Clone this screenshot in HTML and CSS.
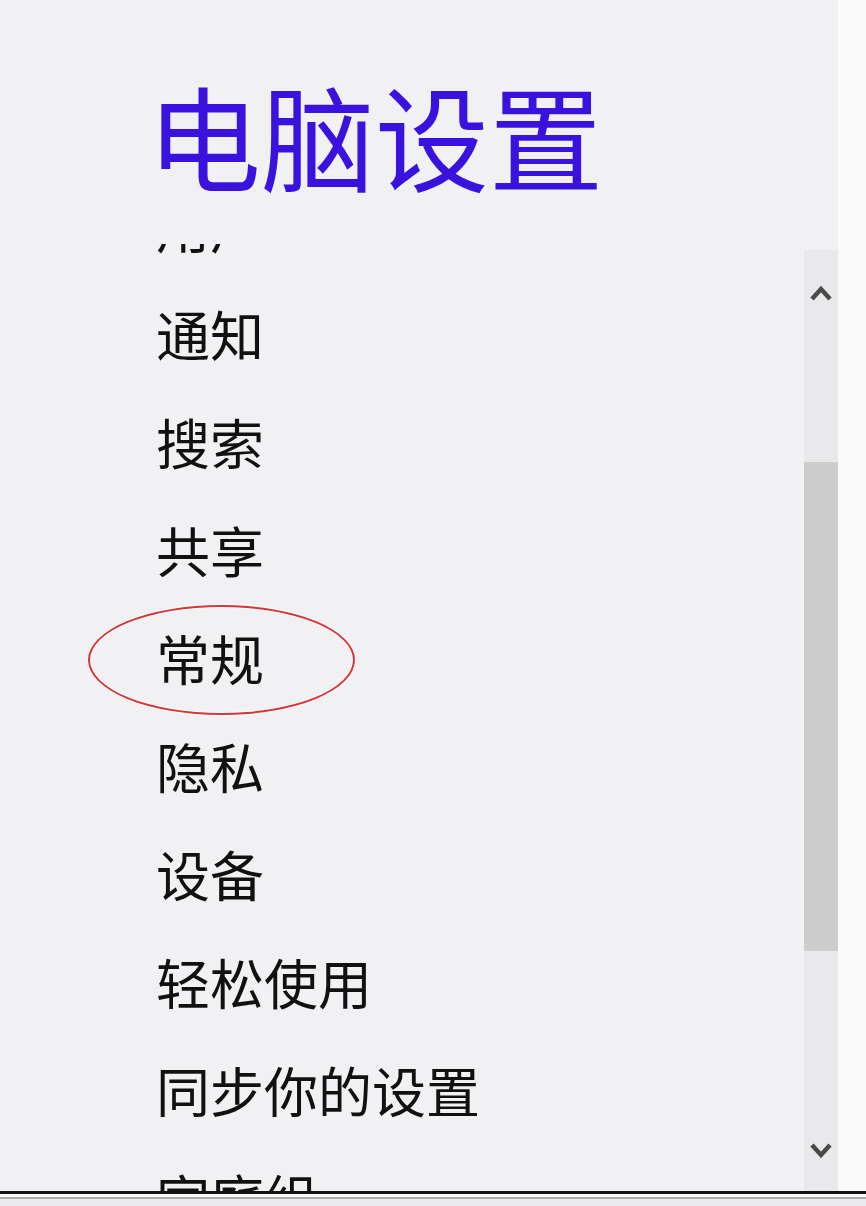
FILE: index.html
```html
<!DOCTYPE html>
<html>
<head>
    <title>电脑设置</title>
    <link rel="stylesheet" href="styles.css">
</head>
<body>
    <div class="window">
        <div class="main">
            <div class="header">
                <h1 class="title">电脑设置</h1>
            </div>
            <div class="pane">
                <div class="list-view">
                    <ul class="menu">
                        <li class="menu-item">用户</li>
                        <li class="menu-item">通知</li>
                        <li class="menu-item">搜索</li>
                        <li class="menu-item">共享</li>
                        <li class="menu-item marked">常规<span class="ring"></span></li>
                        <li class="menu-item">隐私</li>
                        <li class="menu-item">设备</li>
                        <li class="menu-item">轻松使用</li>
                        <li class="menu-item">同步你的设置</li>
                        <li class="menu-item">家庭组</li>
                    </ul>
                </div>
                <div class="scrollbar">
                    <div class="scroll-btn up">
                        <svg width="24" height="18" viewBox="0 0 24 18"><path d="M3 15 L12 5 L21 15" fill="none" stroke="#4a4a4a" stroke-width="4.5"/></svg>
                    </div>
                    <div class="scroll-track">
                        <div class="scroll-thumb"></div>
                    </div>
                    <div class="scroll-btn down">
                        <svg width="24" height="18" viewBox="0 0 24 18"><path d="M3 3 L12 13 L21 3" fill="none" stroke="#4a4a4a" stroke-width="4.5"/></svg>
                    </div>
                </div>
            </div>
        </div>
        <div class="edge"></div>
    </div>
    <div class="frame-bottom"></div>
</body>
</html>
```

FILE: styles.css
```css
body {
    margin: 0;
    background: #f1f0f3;
    font-family: "Noto Sans CJK SC", "Liberation Sans", sans-serif;
    height: 1206px;
    overflow: hidden;
}
.window {
    display: flex;
    height: 1191px;
}
.main {
    width: 838px;
    display: flex;
    flex-direction: column;
}
.edge {
    width: 28px;
    background: #fafafa;
}
.header {
    height: 244px;
}
.title {
    margin: 0;
    padding: 77px 0 0 147px;
    font-size: 114px;
    line-height: 1;
    font-weight: normal;
    color: #3a12de;
}
.pane {
    flex: 1;
    display: flex;
    min-height: 0;
}
.list-view {
    flex: 1;
    overflow: hidden;
}
.menu {
    list-style: none;
    margin: -72px 0 0 0;
    padding: 0 0 0 156px;
}
.menu-item {
    height: 108px;
    line-height: 108px;
    font-size: 54px;
    color: #111;
    position: relative;
}
.ring {
    position: absolute;
    left: -68px;
    top: 1px;
    width: 263px;
    height: 106px;
    border: 2px solid #d8353a;
    border-radius: 50%;
    box-shadow: 0 0 0 1px #fff, inset 0 0 0 1px #fff;
}
.scrollbar {
    width: 34px;
    margin-top: 6px;
    background: #e9e9eb;
    display: flex;
    flex-direction: column;
}
.scroll-btn {
    display: flex;
    align-items: center;
    justify-content: center;
}
.scroll-btn.up {
    height: 86px;
}
.scroll-btn.down {
    height: 80px;
}
.scroll-track {
    flex: 1;
    padding-top: 126px;
}
.scroll-thumb {
    height: 489px;
    background: #cdcdcd;
}
.frame-bottom {
    height: 15px;
    border-top: 3px solid #111;
    box-sizing: border-box;
    background: linear-gradient(#fafafa 0 3px, #a8a8a8 3px 5px, #ececee 5px);
}
```
